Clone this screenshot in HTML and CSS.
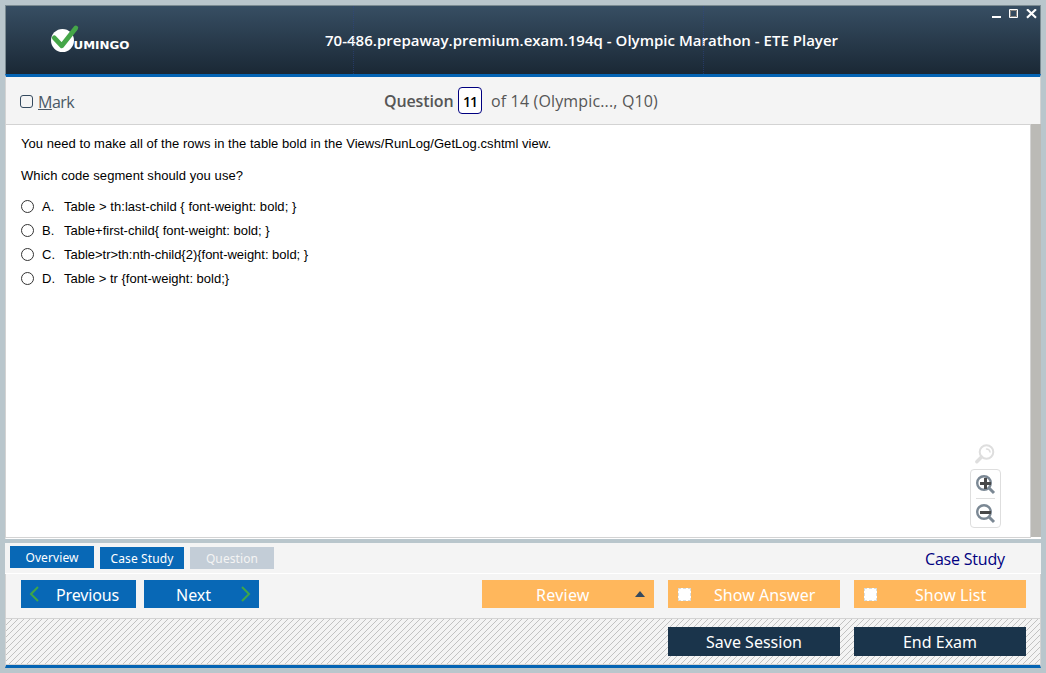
FILE: index.html
```html
<!DOCTYPE html>
<html lang="en">
<head>
<meta charset="utf-8">
<title>ETE Player</title>
<link rel="stylesheet" href="styles.css">
</head>
<body>
<div class="window">
  <header class="header">
    <svg class="logo" width="84" height="34" viewBox="0 0 84 34">
      <circle cx="12.5" cy="19.500" r="11.5" fill="#fff"/>
      <path d="M4.300 16.800L11.800 24.800L25.800 7" fill="none" stroke="#45a648" stroke-width="4.800" stroke-linecap="round" stroke-linejoin="round"/>
      <text class="logo-text" x="23.500" y="28" textLength="56" lengthAdjust="spacingAndGlyphs">UMINGO</text>
    </svg>
    <h1 class="title">70-486.prepaway.premium.exam.194q - Olympic Marathon - ETE Player</h1>
    <svg class="controls" width="46" height="12" viewBox="0 0 46 12">
      <path d="M0 7h9v2H0z" fill="#fff"/>
      <path d="M17.5 .5h8v8h-8z" fill="none" stroke="#fff"/>
      <path d="M18.5 1.5h6v6h-6z" fill="none" stroke="#8b8680"/>
      <path d="M35 .3L44 8.700M44 .3L35 8.700" stroke="#fff" stroke-width="2.200"/>
    </svg>
  </header>
  <section class="status">
    <label class="mark"><span class="mark-box"></span><span class="mark-text"><u>M</u>ark</span></label>
    <div class="counter"><b class="counter-label">Question</b><span class="counter-box">11</span><span class="counter-rest">of 14 (Olympic..., Q10)</span></div>
  </section>
  <main class="content">
    <div class="page">
      <p class="line q1">You need to make all of the rows in the table bold in the Views/RunLog/GetLog.cshtml view.</p>
      <p class="line q2">Which code segment should you use?</p>
      <ul class="answers">
        <li class="answer"><i class="radio"></i><span class="letter">A.</span><span class="a1">Table &gt; th:last-child { font-weight: bold; }</span></li>
        <li class="answer"><i class="radio"></i><span class="letter">B.</span><span>Table+first-child{ font-weight: bold; }</span></li>
        <li class="answer"><i class="radio"></i><span class="letter">C.</span><span class="a3">Table&gt;tr&gt;th:nth-child{2){font-weight: bold; }</span></li>
        <li class="answer"><i class="radio"></i><span class="letter">D.</span><span>Table &gt; tr {font-weight: bold;}</span></li>
      </ul>
      <div class="zoomer">
        <svg class="lens" width="22" height="22" viewBox="0 0 22 22" fill="none" stroke="#dedede" stroke-linecap="round">
          <circle cx="12.500" cy="8" r="6.800" stroke-width="2"/><path d="M7.500 13L2.800 17.700" stroke-width="3.400"/><path d="M12.500 5q3 0 3.500 3" stroke-width="1.500"/>
        </svg>
        <div class="zoom-box">
          <svg class="zoom-icon" width="20" height="20" viewBox="0 0 20 20" fill="none"><circle cx="8" cy="8" r="6.800" stroke="#7b8894" stroke-width="2.400"/><path d="M13 13l5 5" stroke="#7b8894" stroke-width="3"/><path d="M4 8.500h11M9.500 3v11" stroke="#484848" stroke-width="3"/></svg>
          <div class="zoom-rule"></div>
          <svg class="zoom-icon" width="20" height="20" viewBox="0 0 20 20" fill="none"><circle cx="8" cy="8" r="6.800" stroke="#7b8894" stroke-width="2.400"/><path d="M13 13l5 5" stroke="#7b8894" stroke-width="3"/><path d="M4 8.500h11" stroke="#484848" stroke-width="3"/></svg>
        </div>
      </div>
    </div>
    <div class="scrollbar"></div>
  </main>
  <nav class="tabs">
    <span class="tab tab-first">Overview</span><span class="tab tab-case">Case Study</span><span class="tab tab-off">Question</span>
    <span class="case-link">Case Study</span>
  </nav>
  <section class="nav">
    <span class="btn blue"><svg width="10" height="16" viewBox="0 0 10 16"><path d="M9 1L2 8L9 15" fill="none" stroke="#3fa648" stroke-width="2"/></svg><span class="prev">Previous</span></span>
    <span class="btn blue"><span class="next">Next</span><svg width="10" height="16" viewBox="0 0 10 16"><path d="M1 1L8 8L1 15" fill="none" stroke="#3fa648" stroke-width="2"/></svg></span>
    <span class="btn orange review"><span class="review-text">Review</span><svg class="arrow" width="10" height="6" viewBox="0 0 10 6"><path d="M0 6L5 0L10 6z" fill="#34495e"/></svg></span>
    <span class="btn orange"><i class="check"></i><span class="sa">Show Answer</span></span>
    <span class="btn orange"><i class="check"></i><span class="sl">Show List</span></span>
  </section>
  <footer class="footer">
    <svg class="hatch" width="1034" height="45"><defs><pattern id="h" width="6" height="6" patternUnits="userSpaceOnUse"><path d="M0 5h1v1H0zM1 4h1v1H1zM2 3h1v1H2zM3 2h1v1H3zM4 1h1v1H4zM5 0h1v1H5z" fill="#c2c2c2" shape-rendering="crispEdges"/></pattern></defs><rect width="1034" height="45" fill="url(#h)"/></svg>
    <span class="btn dark">Save Session</span>
    <span class="btn dark">End Exam</span>
  </footer>
</div>
</body>
</html>
```
FILE: styles.css
```css
* { box-sizing: border-box; }
body { margin: 0; padding: 5px; height: 673px; background: #b9c6cc; overflow: hidden; font-family: "Noto Sans", "Open Sans", sans-serif; }
.window { width: 1036px; display: flex; flex-direction: column; }
.header { height: 69px; border: 1px solid #7b8b92; border-bottom: 0; background: linear-gradient(#374e63, #1a2835); display: flex; position: relative; }
.header::before { content: ""; position: absolute; left: 347px; top: 0; width: 349px; height: 68px; border: 1px dotted #2d4690; border-width: 0 1px; opacity: .5; }
.logo { margin: 15px 0 0 44px; flex: none; }
.logo-text { font: bold 10px "DejaVu Sans", sans-serif; fill: #fff; }
.title { margin: 22px 0 0 191px; font: 600 15px/24px "Open Sans", sans-serif; letter-spacing: .016px; color: #fff; white-space: nowrap; }
.controls { position: absolute; left: 986px; top: 3px; }
.status { height: 51px; border: 1px solid #d3d3d3; border-top: 3px solid #0464b4; background: #f4f4f4; display: flex; color: #565656; }
.mark { display: flex; width: 378px; padding: 18px 0 0 14px; color: #4a5865; }
.mark-box { width: 13px; height: 13px; border: 1px solid #34495e; border-radius: 3px; margin-right: 5px; }
.mark-text { font: 16px/20px "Open Sans", sans-serif; letter-spacing: -.5px; margin-top: -3px; }
.counter { display: flex; font: 16px/24px "Open Sans", sans-serif; padding-top: 10px; white-space: nowrap; }
.counter-label { font-weight: 600; width: 74px; line-height: 28px; letter-spacing: -.12px; }
.counter-box { width: 24px; height: 27px; border: 1px solid #000080; border-radius: 4px; background: #fff; color: #000; font: 600 14px/28px "Open Sans", sans-serif; letter-spacing: -1px; text-align: center; margin-right: 9px; }
.counter-rest { line-height: 28px; letter-spacing: .15px; }
.content { height: 414px; display: flex; background: #fff; border-bottom: 1px solid #fff; border-left: 1px solid #d3d3d3; }
.page { position: relative; flex: 1; height: 413px; border-right: 1px solid #d3d3d3; border-bottom: 1px solid #d3d3d3; padding: 11px 0 0 15px; font: 13px/16px "Liberation Sans", Arial, sans-serif; color: #000; }
.scrollbar { width: 10px; height: 413px; background: #bbbab6; margin-top: -1px; }
.line { margin: 0 0 16px; white-space: nowrap; }
.q1 { letter-spacing: .045px; }
.q2 { letter-spacing: .07px; }
.a1 { letter-spacing: .05px; }
.a3 { letter-spacing: -.02px; }
.answers { list-style: none; margin: -5px 0 0; padding: 0; }
.answer { display: flex; height: 24px; align-items: flex-start; padding-top: 4px; white-space: nowrap; }
.radio { width: 13px; height: 13px; border: 1px solid #333; border-radius: 50%; margin: 1px 8px 0 0; }
.letter { width: 22px; }
.zoomer { position: absolute; left: 964px; top: 319px; width: 31px; }
.lens { display: block; margin: 0 0 3px 4px; }
.zoom-box { height: 59px; border: 1px solid #dedede; border-radius: 4px; padding: 5px 4px 0 5px; }
.zoom-icon { display: block; height: 20px; }
.zoom-rule { height: 1px; width: 19px; background: #dedede; margin: 3px 0 5px; }
.tabs { height: 31px; margin-top: 4px; border-bottom: 1px solid #fff; background: #f4f4f4; display: flex; gap: 6px; padding: 4px 0 0 5px; font-size: 12px; line-height: 23px; color: #fff; text-align: center; }
.tab { width: 84px; height: 22px; background: #0868b6; white-space: nowrap; padding-top: 1px; line-height: 22px; letter-spacing: .1px; }
.tab-first { margin-top: -1px; }
.tab-off { background: #c3cdd7; color: #f4f4f4; }
.case-link { margin: 1px 0 0 645px; font: 16px/22px "Open Sans", sans-serif; letter-spacing: -.2px; color: #000080; white-space: nowrap; }
.nav { height: 45px; border: 1px solid #d3d3d3; border-top: 0; background: #f4f4f4; display: flex; padding: 6px 0 0 15px; }
.btn { height: 28px; display: flex; align-items: center; color: #fff; font-size: 16px; line-height: 28px; white-space: nowrap; flex: none; }
.btn + .btn { margin-left: 14px; }
.btn > span { padding-top: 2px; }
.blue { width: 115px; background: #0868b6; padding: 0 8px; justify-content: space-between; }
.blue + .blue { margin-left: 8px; }
.prev { margin-right: 9px; letter-spacing: -.15px; }
.next { margin-left: 24px; }
.orange { position: relative; width: 172px; background: #ffb75c; }
.btn.review { margin-left: 223px; }
.review-text { margin-left: 54px; letter-spacing: .25px; }
.arrow { position: absolute; left: 153px; top: 11px; }
.check { width: 13px; height: 13px; border: 1px dashed #d7dde0; background: #fff; margin-left: 10px; margin-right: 23px; }
.sa { letter-spacing: .06px; }
.sl { margin-left: 15px; letter-spacing: .06px; }
.footer { position: relative; height: 49px; border: 1px solid #d3d3d3; border-top: 0; border-bottom: 3px solid #0464b4; background: #f4f4f4; display: flex; padding: 8px 0 0 662px; }
.footer::after { content: ""; position: absolute; left: 0; right: 0; bottom: 0; height: 1px; background: #d3d3d3; }
.hatch { position: absolute; left: 0; top: 0; }
.dark { position: relative; width: 172px; height: 29px; background: #1a344b; justify-content: center; }
.blue + .btn.review { margin-left: 223px; }
```
